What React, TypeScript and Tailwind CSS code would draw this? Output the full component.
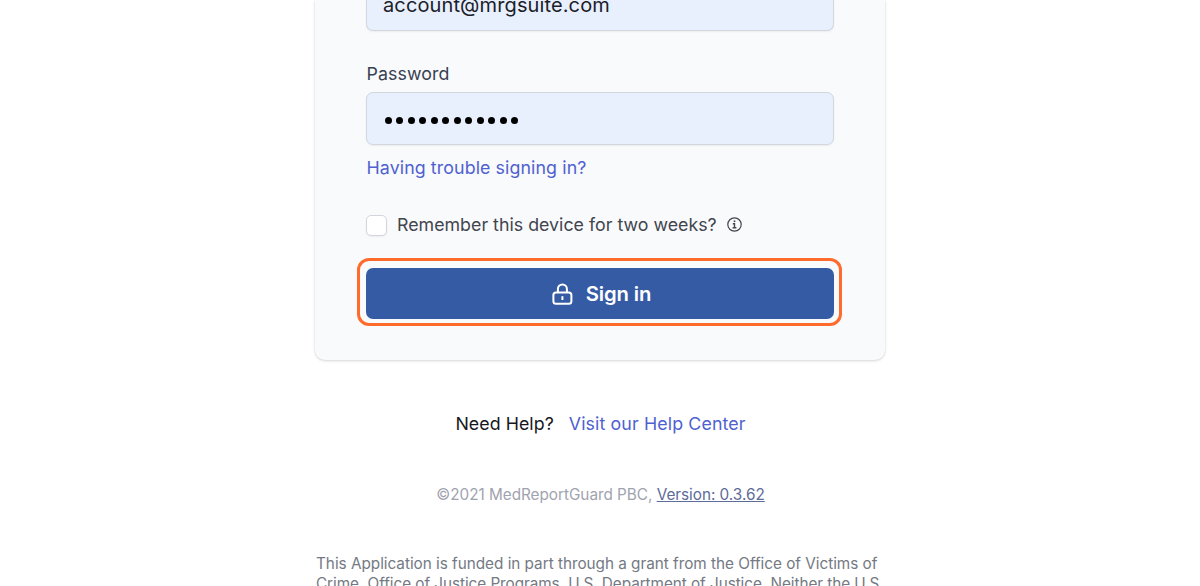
function LockIcon() {
    return (
        <svg className="h-[23px] w-[21px] shrink-0" fill="none" stroke="currentColor" viewBox="0 0 21 23">
            <rect x="1.4" y="9.4" width="18" height="11.4" rx="2.6" strokeWidth={2} />
            <path strokeWidth={2} d="M5.9 9.4V5.9a4.5 4.5 0 019 0v3.5" />
            <path strokeWidth={2} d="M10.4 13.2v3.8" />
        </svg>
    );
}

function InfoIcon() {
    return (
        <svg className="mb-px ml-[10.5px] h-[15px] w-[15px] shrink-0" fill="none" stroke="currentColor" viewBox="0 0 15 15">
            <circle cx="7.5" cy="7.5" r="6.7" strokeWidth={1.2} />
            <path strokeWidth={1.6} d="M7.5 3.4v1.7" />
            <path strokeWidth={1.4} d="M5.8 6.7h1.7v4M5.6 10.8h3.8" />
        </svg>
    );
}

function PasswordDots() {
    return (
        <div className="flex gap-[4.47px] pt-[3px]">
            {Array.from({ length: 12 }, (_, i) => (
                <span key={i} className="h-[7px] w-[7px] rounded-full bg-black" />
            ))}
        </div>
    );
}

function SignInCard() {
    return (
        <section className="h-[360px] w-[570px] shrink-0 rounded-b-[10px] bg-[#f9fafc] px-[51px] shadow-[0_1px_3px_rgba(0,0,0,0.14),0_0_2px_rgba(0,0,0,0.08)]">
            <div className="flex h-[31px] items-end rounded-b-[7px] border border-t-0 border-[#d2d6df] bg-[#e8f0fe] px-4 pb-[11px] shadow-[0_1px_2px_rgba(0,0,0,0.06)]">
                <span className="text-[20px] leading-[28px] tracking-[0.12px] text-[#1c2028]">account@mrgsuite.com</span>
            </div>

            <div className="mt-[31px] h-[30px] pl-[0.5px] text-[17.8px] leading-[24px] tracking-[0.1px] text-[#374151]">Password</div>
            <div className="flex h-[53px] items-center rounded-[7px] border border-[#d2d6df] bg-[#e8f0fe] px-[18px] shadow-[0_1px_2px_rgba(0,0,0,0.06)]">
                <PasswordDots />
            </div>
            <a className="mt-[11px] block h-[24px] pl-[0.5px] text-[17.8px] leading-[24px] tracking-[0.1px] text-[#4f61d0]">Having trouble signing in?</a>

            <div className="mt-[33px] flex h-[24px] items-center text-[#42454e]">
                <span className="h-[21px] w-[21px] rounded-[5px] border border-[#d2d6dc] bg-white shadow-[0_1px_2px_rgba(0,0,0,0.05)]" />
                <span className="ml-2.5 text-[17.8px] leading-[24px] tracking-[0.01px] whitespace-nowrap">Remember this device for two weeks?</span>
                <InfoIcon />
            </div>

            <div className="-mx-[9.5px] mt-[21px] h-[68px] w-[485px] rounded-[12px] border-[3px] border-[#ff6b2c] p-[6.5px]">
                <button className="flex h-[51px] w-[468px] items-center justify-center gap-[13px] rounded-[7px] bg-[#365ba5] pt-[2px] pl-[3px] text-[20.3px] font-semibold tracking-[-0.15px] text-white">
                    <LockIcon />
                    <span>Sign in</span>
                </button>
            </div>
        </section>
    );
}

export default function App() {
    return (
        <main className="flex h-[586px] flex-col items-center overflow-hidden bg-white font-['Inter',sans-serif]">
            <SignInCard />
            <p className="mt-[51px] flex h-[25px] shrink-0 gap-[15px] pl-px text-[17.8px] leading-[25px] whitespace-nowrap">
                <span className="tracking-[0.05px] text-[#16181d]">Need Help?</span>
                <a className="tracking-[0.12px] text-[#4f61d0]">Visit our Help Center</a>
            </p>
            <p className="mt-[49px] h-[20px] shrink-0 pl-px text-[15.3px] leading-[20px] tracking-[-0.02px] whitespace-nowrap text-[#9fa3af]">
                ©2021 MedReportGuard PBC, <a className="text-[#5d6b98] underline">Version: 0.3.62</a>
            </p>
            <p className="mt-[49px] w-[570px] shrink-0 pl-px text-[15.3px] leading-[20px] tracking-[-0.02px] whitespace-nowrap text-[#747983]">
                This Application is funded in part through a grant from the Office of Victims of
                <br />
                <span className="tracking-[-0.05px]">Crime, Office of Justice Programs, U.S. Department of Justice. Neither the U.S.</span>
            </p>
        </main>
    );
}
